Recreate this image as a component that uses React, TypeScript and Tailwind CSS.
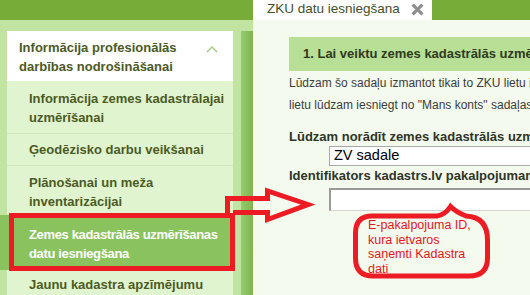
import React from 'react';

const menuItems = [
    { lines: ['Informācija zemes kadastrālajai', 'uzmērīšanai'], pad: 'pt-[8px] pb-[6px]' },
    { lines: ['Ģeodēzisko darbu veikšanai'], pad: 'pt-[6px] pb-[6px]' },
    { lines: ['Plānošanai un meža', 'inventarizācijai'], pad: 'pt-[7px] pb-[3px]' },
];

const Sidebar = () => {
    return (
        <div className="flex w-[253px] shrink-0 bg-[#c2e4a2] pt-[11px] pl-[7px]">
            <div className="flex w-[226px] flex-col">
                <div className="flex items-start justify-between bg-white pt-[7px] pb-[5px] pl-[12px] pr-[15px] text-[13px] leading-[19px] font-bold text-[#4d5a26]">
                    <div>
                        <div>Informācija profesionālās</div>
                        <div>darbības nodrošināšanai</div>
                    </div>
                    <svg width="12" height="8" viewBox="0 0 12 8" className="mt-[7px]">
                        <polyline points="1,7 6,2 11,7" fill="none" stroke="#9dcc78" strokeWidth="1.3" />
                    </svg>
                </div>
                <div className="flex flex-col bg-[#e0f5cf] text-[13px] leading-[19px] font-bold text-[#4d5a26]">
                    {menuItems.map((item) => (
                        <div key={item.lines[0]} className={`border-b border-[#cde6b6] pl-[22px] ${item.pad}`}>
                            {item.lines.map((l) => (
                                <div key={l}>{l}</div>
                            ))}
                        </div>
                    ))}
                    <div className="-ml-[7px] bg-[#8ac35d] pt-[10px] pb-[7px] pl-[29px] tracking-[-0.35px] text-white">
                        <div>Zemes kadastrālās uzmērīšanas</div>
                        <div>datu iesniegšana</div>
                    </div>
                    <div className="pt-[5px] pl-[22px] pb-[10px]">
                        <div>Jaunu kadastra apzīmējumu</div>
                    </div>
                </div>
            </div>
            <div className="ml-[8px] w-[12px] shrink-0 bg-gradient-to-r from-[#97cb6d] to-[#7db44f]" />
        </div>
    );
};

const Content = () => {
    return (
        <div className="flex min-w-0 flex-1 flex-col bg-[#f4faee] pl-[36px]">
            <div className="mt-[17px] flex h-[34px] items-center bg-[#b8df96] pl-[14px] whitespace-nowrap text-[13px] font-bold text-[#2f3a1e]">
                1. Lai veiktu zemes kadastrālās uzmērīšanas datu iesniegšanu
            </div>
            <div className="mt-[1px] text-[12px] leading-[22px] whitespace-nowrap text-[#3c3c3c]">
                <div>Lūdzam šo sadaļu izmantot tikai to ZKU lietu iesniegšanai</div>
                <div>lietu lūdzam iesniegt no "Mans konts" sadaļas</div>
            </div>
            <div className="mt-[13px] text-[13px] leading-[16px] font-bold whitespace-nowrap text-[#2f3527]">
                Lūdzam norādīt zemes kadastrālās uzmērīšanas veidu
            </div>
            <div className="mt-[1px] ml-[40px] flex h-[20px] w-[320px] shrink-0 items-center border border-[#a9a9a9] bg-white pl-[4px] text-[14.5px] text-black">
                ZV sadale
            </div>
            <div className="mt-[2px] text-[13px] leading-[16px] font-bold whitespace-nowrap text-[#2f3527]">
                Identifikators kadastrs.lv pakalpojumam
            </div>
            <div className="mt-[4px] ml-[40px] h-[23px] w-[320px] shrink-0 border-t-2 border-l-2 border-r border-b border-t-[#9a9a9a] border-l-[#9a9a9a] border-r-[#d4d4d4] border-b-[#d4d4d4] bg-white" />
        </div>
    );
};

const Annotations = () => {
    return (
        <>
            <svg className="pointer-events-none absolute top-0 left-0" width="530" height="295" viewBox="0 0 530 295">
                <rect x="11.5" y="215.5" width="221" height="53" fill="none" stroke="#ed1c24" strokeWidth="5" />
                <path
                    d="M227.5 213 V198.5 H267.5 V191 L308 204.5 L267.5 219.5 V212.5 H233"
                    fill="none"
                    stroke="#ed1c24"
                    strokeWidth="5"
                    strokeLinejoin="miter"
                />
                <path
                    d="M372 216 H437 Q445 215 450.5 206.5 Q456 212 466 216 Q487.5 217 487.5 240 V258 Q487.5 276 469 276 H373 Q355.5 276 355.5 258 V233 Q355.5 216 372 216 Z"
                    fill="none"
                    stroke="#ed1c24"
                    strokeWidth="5"
                />
            </svg>
            <div className="absolute top-[218px] left-[368px] text-[12.5px] leading-[14.5px] text-[#e8141c]">
                <div>E-pakalpojuma ID,</div>
                <div>kura ietvaros</div>
                <div>saņemti Kadastra</div>
                <div>dati</div>
            </div>
        </>
    );
};

export default function App() {
    return (
        <div className="relative flex h-[295px] w-[530px] flex-col overflow-hidden bg-[#f4faee] font-['Liberation_Sans',Arial,sans-serif]">
            <div className="flex h-[20px] shrink-0">
                <div className="w-[253px] bg-[#78ac38]" />
                <div className="flex w-[179px] items-center bg-white pl-[14px] text-[13.5px] text-[#44502a]">
                    <span className="-mt-[2px]">ZKU datu iesniegšana</span>
                    <svg width="13" height="13" viewBox="0 0 12 12" className="ml-[11px] -mt-[1px]">
                        <path d="M1.5 1.5 L10.5 10.5 M10.5 1.5 L1.5 10.5" stroke="#8e8e8e" strokeWidth="3" />
                    </svg>
                </div>
                <div className="flex-1 bg-[#78ac38]" />
            </div>
            <div className="flex min-h-0 flex-1">
                <Sidebar />
                <Content />
            </div>
            <Annotations />
        </div>
    );
}
